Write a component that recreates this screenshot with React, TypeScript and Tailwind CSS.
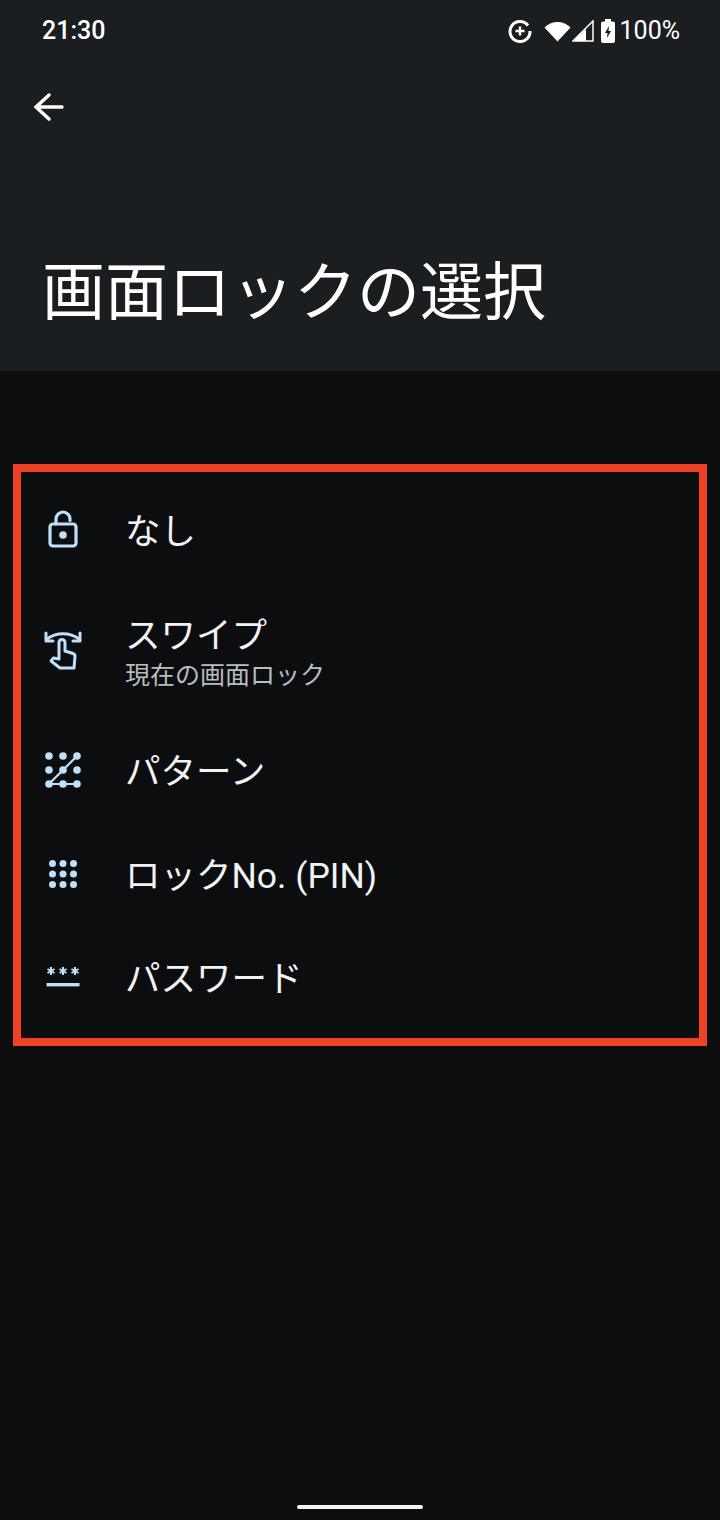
const jp = "font-['Roboto','Noto_Sans_CJK_JP',sans-serif]";

function LockIcon() {
  return (
    <svg width="30" height="38" viewBox="0 0 30 38" fill="none" stroke="#bfe0fa" strokeWidth="3.200">
      <path d="M8 14V9a7 7 0 0 1 14 0v1.500" strokeLinecap="round" />
      <rect x="2" y="14" width="26" height="22" rx="3" />
      <circle cx="15" cy="25" r="3.800" fill="#bfe0fa" stroke="none" />
    </svg>
  );
}

function SwipeIcon() {
  return (
    <svg width="38" height="40" viewBox="0 0 38 40" fill="none" stroke="#bfe0fa" strokeWidth="3" strokeLinejoin="round" strokeLinecap="round">
      <path d="M3 9c9-7 23-7 32 0" />
      <path d="M2 3v8h7" />
      <path d="M36 3v8h-7" />
      <path d="M15 29V12.500a3 3 0 0 1 6 0V21l8 2.500c1.500.5 2 1.500 2 3l-1 11.500H16l-9-7 2.500-3 5.500 1z" />
    </svg>
  );
}

function PatternIcon() {
  const pts = [4, 18, 32];
  return (
    <svg width="36" height="36" viewBox="0 0 36 36" fill="#bfe0fa" stroke="none">
      {pts.map((y) => pts.map((x) => <circle key={`${x}-${y}`} cx={x} cy={y} r="3.800" />))}
      <path d="M4 32 32 4M4 32h28" stroke="#bfe0fa" strokeWidth="2.200" fill="none" />
    </svg>
  );
}

function PinIcon() {
  const pts = [3.500, 14, 24.500];
  return (
    <svg width="28" height="28" viewBox="0 0 28 28" fill="#bfe0fa">
      {pts.map((y) => pts.map((x) => <circle key={`${x}-${y}`} cx={x} cy={y} r="3.500" />))}
    </svg>
  );
}

function PasswordIcon() {
  const xs = [5, 17, 29];
  return (
    <svg width="34" height="22" viewBox="0 0 34 22" stroke="#bfe0fa" strokeWidth="2" fill="none">
      {xs.map((x) => (
        <g key={x}>
          <path d={`M${x} 1v8M${x - 3.500} 3l7 4M${x + 3.500} 3l-7 4`} />
        </g>
      ))}
      <rect x="0.500" y="17" width="33" height="3.400" fill="#bfe0fa" stroke="none" />
    </svg>
  );
}

function Row({ icon, title, sub, rowClass, iconClass }: { icon: React.ReactNode; title: string; sub?: string; rowClass: string; iconClass: string }) {
  return (
    <div className={`flex items-center ${rowClass}`}>
      <div className={`w-[84px] mr-[20px] shrink-0 flex justify-center ${iconClass}`}>{icon}</div>
      <div className="flex flex-col pt-[4px]">
        <div className="text-[35.500px] leading-[46px] text-[#f1f3f4]">{title}</div>
        {sub && <div className="text-[25px] leading-[32px] mt-[1px] text-[#b9bdc1]">{sub}</div>}
      </div>
    </div>
  );
}

export default function App() {
  return (
    <div className={`relative w-[720px] h-[1520px] bg-[#0c0d0f] overflow-hidden flex flex-col ${jp}`}>
      <div className="h-[371px] shrink-0 bg-[#1a1e21] flex flex-col">
        <div className="h-[62px] flex items-center justify-between pl-[42px] pr-[40px] text-white">
          <span className="text-[25px] font-medium">21:30</span>
          <div className="flex items-center">
            <svg width="24" height="24" viewBox="0 0 24 24" fill="none" stroke="white" strokeWidth="3" className="mr-[12px]">
              <path d="M20 6.500A10 10 0 1 0 22 12" />
              <path d="M12 7.500v9M7.500 12h9" strokeWidth="2.400" />
            </svg>
            <svg width="27" height="21" viewBox="0 0 27 21" fill="white" className="mr-[1px]">
              <path d="M0.500 6.500C7 -1 20 -1 26.500 6.500L13.500 20.500z" />
            </svg>
            <svg width="22" height="22" viewBox="0 0 22 22" className="mr-[7px]">
              <path d="M21 1v20H1z" fill="none" stroke="white" strokeWidth="1.500" />
              <path d="M14 9 1 21h13z" fill="white" />
            </svg>
            <svg width="14" height="24" viewBox="0 0 14 24" className="mr-[5px]">
              <path d="M4 0h6v2.500h2a2 2 0 0 1 2 2V22a2 2 0 0 1-2 2H2a2 2 0 0 1-2-2V4.500a2 2 0 0 1 2-2h2z" fill="white" />
              <path d="M8 7 4 14h2.500L6 19l4-7H7.500z" fill="#1a1e21" />
            </svg>
            <span className="text-[25px]">100%</span>
          </div>
        </div>
        <div className="pl-[34px] pt-[30px]">
          <svg width="30" height="30" viewBox="0 0 30 30" fill="none" stroke="white" strokeWidth="3.400" strokeLinecap="round">
            <path d="M2 15h26M15 3 2 15l13 12" />
          </svg>
        </div>
        <h1 className="pl-[42px] mt-[128px] text-[63px] leading-[86px] font-normal text-white">画面ロックの選択</h1>
      </div>

      <div className="mt-[93px] mx-[13px] h-[582px] border-8 border-[#ef4123] pt-[6px]">
        <Row icon={<LockIcon />} iconClass="mb-[2px]" title="なし" rowClass="h-[104px]" />
        <Row icon={<SwipeIcon />} iconClass="" title="スワイプ" sub="現在の画面ロック" rowClass="h-[136px]" />
        <Row icon={<PatternIcon />} iconClass="" title="パターン" rowClass="h-[104px]" />
        <Row icon={<PinIcon />} iconClass="" title="ロックNo. (PIN)" rowClass="h-[104px]" />
        <Row icon={<PasswordIcon />} iconClass="" title="パスワード" rowClass="h-[102px]" />
      </div>

      <div className="absolute bottom-[11px] left-[297px] w-[126px] h-[4px] rounded-full bg-[#f2f2f2]" />
    </div>
  );
}
